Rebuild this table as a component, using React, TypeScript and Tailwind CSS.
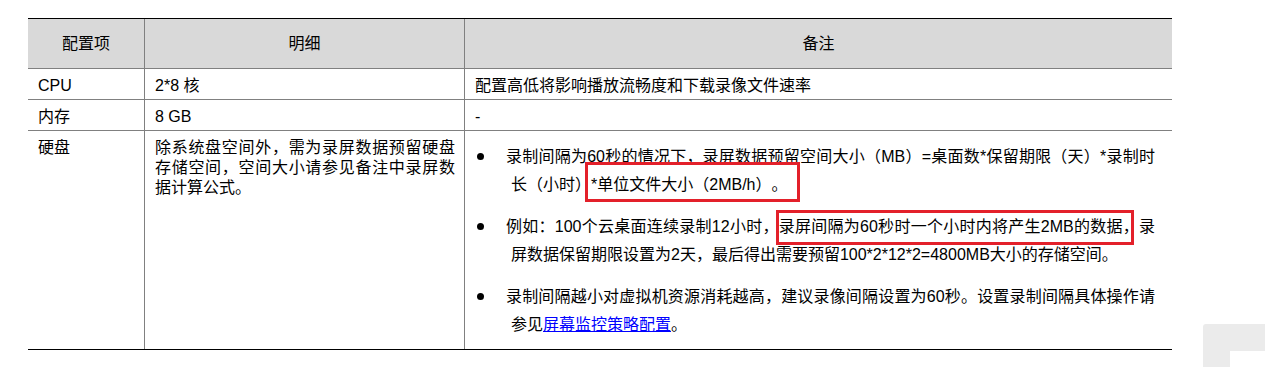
import React from "react";

// Annotation colour used by the red highlight boxes
const MARK = "border-[#e3202a]";

function Mark({ children, box }: { children: React.ReactNode; box: string }) {
  return (
    <span className="relative">
      {children}
      <span className={`pointer-events-none absolute border-[3px] ${MARK} ${box}`} />
    </span>
  );
}

function Bullet({ children }: { children: React.ReactNode }) {
  return (
    <li className="flex">
      <div className="w-[29px] shrink-0">
        <div className="mt-[10px] h-[7px] w-[7px] rounded-full bg-black" />
      </div>
      <div className="flex-1 pl-[5px] -indent-[5px] text-justify leading-[28px]">{children}</div>
    </li>
  );
}

export default function App() {
  return (
    <div className="relative h-[367px] w-[1267px] overflow-hidden bg-white font-['Liberation_Sans','Noto_Sans_CJK_SC',sans-serif] text-[16px] text-black [text-spacing-trim:space-all]">
      <div className="pl-[28px] pt-[18px]">
        <div className="grid w-[1144px] grid-cols-[117px_320px_707px] border-y border-black">
          {/* header */}
          <div className="flex h-[50px] items-center justify-center border-b border-r border-[#808080] bg-[#d9d9d9]">
            配置项
          </div>
          <div className="flex h-[50px] items-center justify-center border-b border-r border-[#808080] bg-[#d9d9d9]">
            明细
          </div>
          <div className="flex h-[50px] items-center justify-center border-b border-[#808080] bg-[#d9d9d9]">
            备注
          </div>

          {/* CPU */}
          <div className="h-[31px] border-b border-r border-[#808080] pl-[10px] pt-[7px] leading-[20px]">CPU</div>
          <div className="h-[31px] border-b border-r border-[#808080] pl-[10px] pt-[7px] leading-[20px]">2*8 核</div>
          <div className="h-[31px] border-b border-[#808080] pl-[10px] pt-[7px] leading-[20px]">
            配置高低将影响播放流畅度和下载录像文件速率
          </div>

          {/* 内存 */}
          <div className="h-[31px] border-b border-r border-[#808080] pl-[10px] pt-[7px] leading-[20px]">内存</div>
          <div className="h-[31px] border-b border-r border-[#808080] pl-[10px] pt-[7px] leading-[20px]">8 GB</div>
          <div className="h-[31px] border-b border-[#808080] pl-[10px] pt-[7px] leading-[20px]">-</div>

          {/* 硬盘 */}
          <div className="h-[218px] border-r border-[#808080] pl-[10px] pt-[7px] leading-[20px]">硬盘</div>
          <div className="h-[218px] border-r border-[#808080] pl-[10px] pr-[9px] pt-[7px] text-justify leading-[20px]">
            除系统盘空间外，需为录屏数据预留硬盘存储空间，空间大小请参见备注中录屏数据计算公式。
          </div>
          <div className="h-[218px] pl-[12px] pr-[17px] pt-[12px]">
            <ul className="flex flex-col gap-[14px]">
              <Bullet>
                录制间隔为60秒的情况下，录屏数据预留空间大小（MB）=桌面数*保留期限（天）*录制时长（小时）
                <Mark box="left-[-6px] right-[-12px] top-[-14px] bottom-[-9px]">*单位文件大小（2MB/h）。</Mark>
              </Bullet>
              <Bullet>
                例如：100个云桌面连续录制12小时，
                <Mark box="left-[-3px] right-[5px] top-[-8px] bottom-[-10px]">录屏间隔为60秒时一个小时内将产生2MB的数据，</Mark>
                录屏数据保留期限设置为2天，最后得出需要预留100*2*12*2=4800MB大小的存储空间。
              </Bullet>
              <Bullet>
                录制间隔越小对虚拟机资源消耗越高，建议录像间隔设置为60秒。设置录制间隔具体操作请参见
                <a href="#" className="text-[#0000ff] underline">
                  屏幕监控策略配置
                </a>
                。
              </Bullet>
            </ul>
          </div>
        </div>
      </div>

      {/* floating widget corner, bottom right */}
      <div className="absolute left-[1203px] top-[324px] h-[43px] w-[62px] rounded-tl-[3px] bg-[#ebebeb]">
        <div className="absolute bottom-0 right-0 h-[16px] w-[35px] bg-white" />
      </div>
    </div>
  );
}
